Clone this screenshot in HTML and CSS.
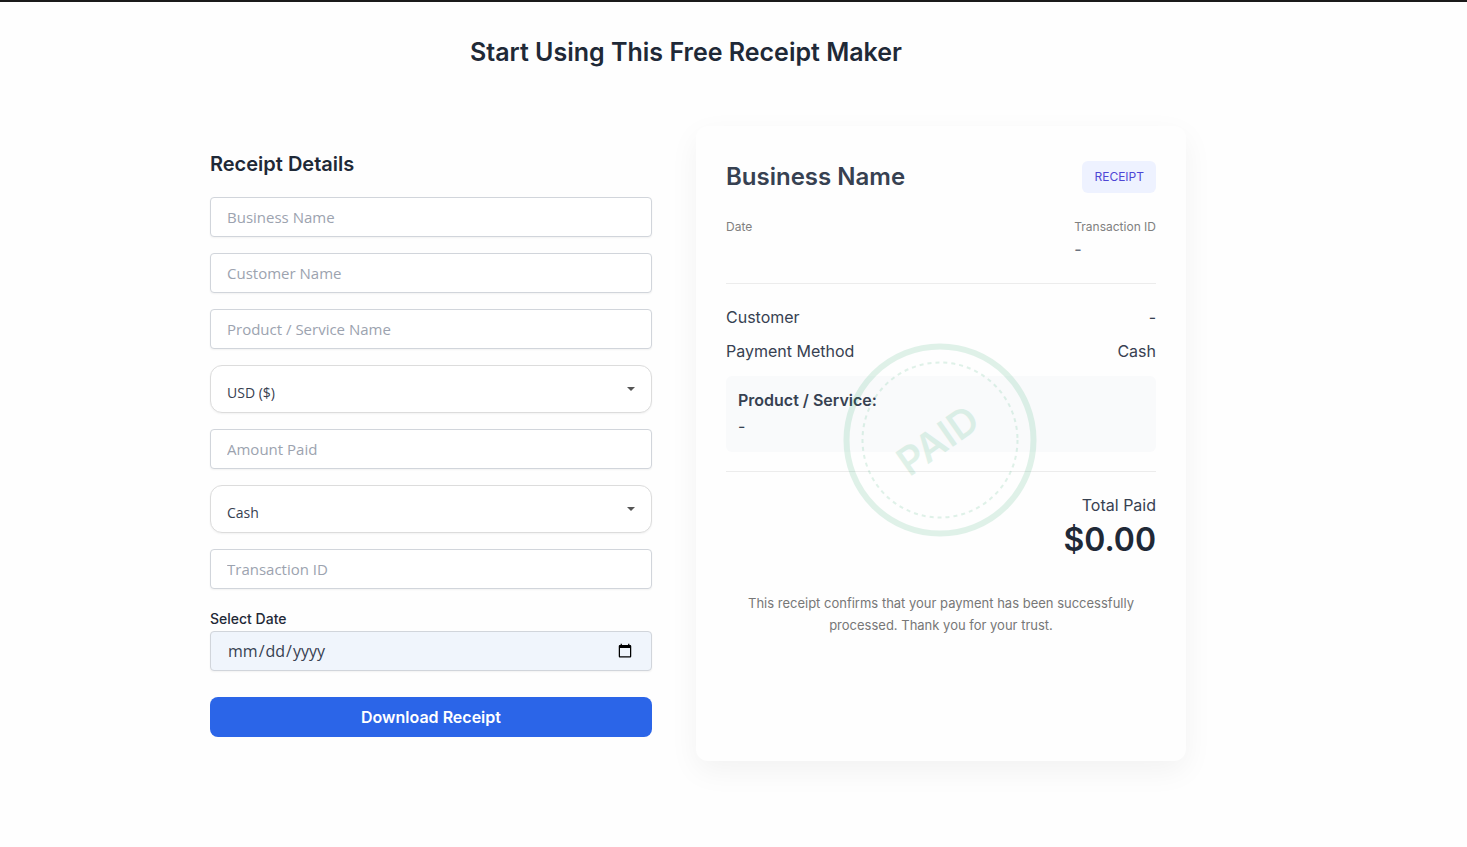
FILE: index.html
```html
<!DOCTYPE html>
<html lang="en">
<head>
    <meta charset="UTF-8">
    <meta name="viewport" content="width=device-width, initial-scale=1.0">
    <title>Free Receipt Maker</title>
    <link rel="stylesheet" href="styles.css">
</head>
<body>
    <main class="page">
        <h1>Start Using This Free Receipt Maker</h1>
        <div class="container">
            <form class="panel" id="receipt-form">
                <h2>Receipt Details</h2>
                <input type="text" class="field" id="business" aria-label="Business Name" placeholder="Business Name">
                <input type="text" class="field" id="customer" aria-label="Customer Name" placeholder="Customer Name">
                <input type="text" class="field" id="product" aria-label="Product / Service Name" placeholder="Product / Service Name">
                <div class="select-wrap">
                    <select id="currency" aria-label="Currency">
                        <option>USD ($)</option>
                    </select>
                    <svg class="arrow" viewBox="0 0 8 4"><path d="M0 0h8L4 4z"/></svg>
                </div>
                <input type="text" class="field" id="amount" aria-label="Amount Paid" placeholder="Amount Paid">
                <div class="select-wrap">
                    <select id="method" aria-label="Payment Method">
                        <option>Cash</option>
                    </select>
                    <svg class="arrow" viewBox="0 0 8 4"><path d="M0 0h8L4 4z"/></svg>
                </div>
                <input type="text" class="field" id="transaction" aria-label="Transaction ID" placeholder="Transaction ID">
                <div class="date-group">
                    <label for="date">Select Date</label>
                    <input type="date" class="field date" id="date">
                </div>
                <button id="download" type="button">Download Receipt</button>
            </form>

            <section class="receipt">
                <div class="row receipt-header">
                    <h2>Business Name</h2>
                    <span class="tag">RECEIPT</span>
                </div>
                <div class="row meta">
                    <div>Date</div>
                    <div>
                        Transaction ID
                        <p class="meta-value">-</p>
                    </div>
                </div>
                <div class="row line"><span>Customer</span><span>-</span></div>
                <div class="row line"><span>Payment Method</span><span>Cash</span></div>
                <div class="product-box">
                    <strong>Product / Service:</strong>
                    <p>-</p>
                </div>
                <div class="total">
                    <p>Total Paid</p>
                    <p class="amount">$0.00</p>
                </div>
                <p class="note">This receipt confirms that your payment has been successfully processed. Thank you for your trust.</p>

                <!-- Paid stamp over the receipt -->
                <svg class="stamp" viewBox="0 0 200 200">
                    <circle cx="100" cy="100" r="93.5" stroke-width="6"/>
                    <circle cx="100" cy="100" r="77.5" stroke-width="2" stroke-dasharray="4 4"/>
                    <text x="98" y="113" text-anchor="middle" transform="rotate(-35 100 100)">PAID</text>
                </svg>
            </section>
        </div>
    </main>
</body>
</html>
```
FILE: styles.css
```css
* {
    margin: 0;
    padding: 0;
    box-sizing: border-box;
}

body {
    background: #fefefe;
    border-top: 2px solid #1a1a1a;
    color: #374151;
    font-family: 'Inter', sans-serif;
    font-size: 16px;
    line-height: 24px;
}

.page {
    padding: 32px 95px 32px 0;
}

h1 {
    color: #1f2937;
    font-size: 25px;
    font-weight: 600;
    line-height: 36px;
    text-align: center;
    margin-bottom: 56px;
}

.container {
    display: grid;
    grid-template-columns: 1fr 1fr;
    gap: 20px;
    max-width: 1000px;
    margin: 0 auto;
}

.panel {
    display: flex;
    flex-direction: column;
    gap: 16px;
    padding: 24px;
}

.panel h2 {
    color: #1f2937;
    font-size: 20px;
    font-weight: 600;
    line-height: 28px;
    margin-bottom: 3px;
}

.field {
    width: 100%;
    height: 40px;
    padding: 8px 16px;
    border: 1px solid #d1d5db;
    border-radius: 4px;
    background: #fff;
    color: #374151;
    font-family: 'Open Sans', sans-serif;
    font-size: 15px;
    box-shadow: 0 1px 2px rgba(0, 0, 0, 0.05);
}

.field::placeholder {
    color: #9ca3af;
}

.select-wrap {
    position: relative;
}

select {
    display: block;
    width: 100%;
    height: 48px;
    padding: 14px 16px 8px;
    border: 1px solid #dcdcdc;
    border-radius: 12px;
    appearance: none;
    background: #fff;
    color: #374151;
    font-family: 'Open Sans', sans-serif;
    font-size: 14px;
    box-shadow: 0 1px 2px rgba(0, 0, 0, 0.05);
}

.arrow {
    position: absolute;
    top: 22px;
    right: 17px;
    width: 8px;
    height: 4px;
    fill: #555;
    pointer-events: none;
}

.date-group label {
    display: block;
    color: #1f2937;
    font-size: 14px;
    font-weight: 500;
    line-height: 20px;
    margin: 4px 0 2px;
}

.date {
    display: block;
    background: #f0f5fc;
    font-size: 16px;
}

button {
    height: 40px;
    margin-top: 10px;
    border: none;
    border-radius: 8px;
    background: #2b65e8;
    color: #fff;
    font-family: inherit;
    font-size: 16px;
    font-weight: 600;
    cursor: pointer;
}

.receipt {
    position: relative;
    padding: 30px;
    border-radius: 12px;
    background: #fefefe;
    box-shadow: 0 10px 30px rgba(0, 0, 0, 0.05);
}

.row {
    display: flex;
    justify-content: space-between;
}

.receipt-header {
    align-items: center;
    padding-top: 5px;
    margin-bottom: 24px;
}

.receipt-header h2 {
    font-size: 24px;
    font-weight: 600;
    line-height: 32px;
}

.tag {
    padding: 4px 12px;
    border-radius: 6px;
    background: #eef2ff;
    color: #4f46d5;
    font-size: 12px;
}

.meta {
    color: #808080;
    font-size: 12px;
    line-height: 20px;
    padding-bottom: 22px;
    border-bottom: 1px solid #ececec;
    margin-bottom: 21px;
}

.meta-value {
    color: #6b7280;
    font-size: 16px;
    font-weight: 500;
    line-height: 24px;
}

.line {
    margin-bottom: 10px;
}

.product-box {
    margin-top: 13px;
    padding: 12px;
    border-radius: 6px;
    background: #f9fafb;
    line-height: 28px;
}

.product-box strong {
    display: block;
    font-weight: 600;
    line-height: 24px;
}

.total {
    margin-top: 19px;
    padding-top: 21px;
    border-top: 1px solid #ececec;
    text-align: right;
}

.total .amount {
    color: #1f2937;
    font-size: 32px;
    font-weight: 600;
    line-height: 46px;
}

.note {
    padding: 29px 16px 0;
    color: #777;
    font-size: 13px;
    line-height: 22px;
    text-align: center;
}

.stamp {
    position: absolute;
    top: 50%;
    left: 50%;
    width: 200px;
    height: 200px;
    margin: -104px 0 0 -101px;
    opacity: 0.13;
    fill: none;
    stroke: #16a05d;
    pointer-events: none;
}

.stamp text {
    fill: #16a05d;
    stroke: none;
    font-size: 39px;
    font-weight: 600;
}
```
